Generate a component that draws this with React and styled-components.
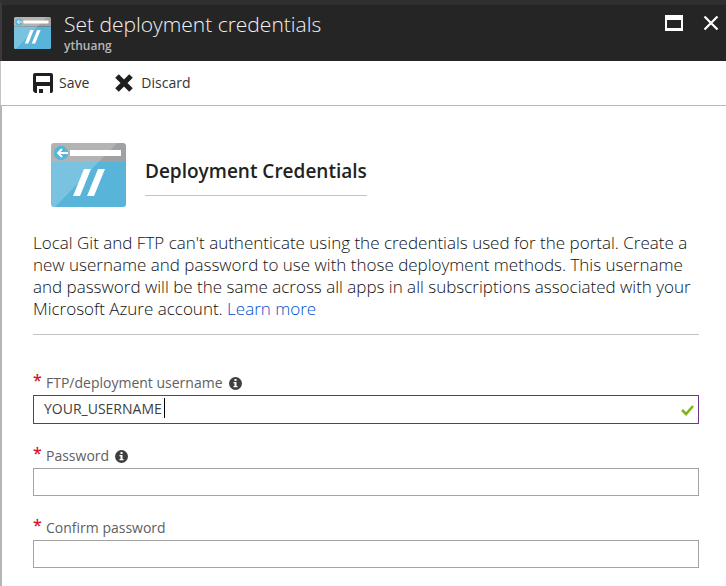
import React, { useId, useState } from "react";
import styled, { createGlobalStyle, css } from "styled-components";

const GlobalStyle = createGlobalStyle`
  *, *::before, *::after { box-sizing: border-box; }
  body {
    margin: 0;
    background: #ffffff;
    color: #333333;
    font-family: "Open Sans", "Noto Sans", sans-serif;
  }
  button, input { font: inherit; }
`;

const Blade = styled.main`
  display: flex;
  flex-direction: column;
  min-height: 100vh;
`;

const Header = styled.header`
  display: flex;
  align-items: flex-start;
  height: 61px;
  padding: 4px 7px 0 12px;
  border-top: 5px solid #2f2f2f;
  border-left: 2px solid #3a3a3a;
  background: #252525;
  color: #f2f2f2;
`;

const HeaderIcon = styled.div`
  display: flex;
  margin: 8px 13px 0 0;
`;

const Titles = styled.div`
  flex: 1;
  min-width: 0;
`;

const Title = styled.h1`
  margin: 0;
  font-size: 21px;
  font-weight: 300;
  line-height: 30px;
  white-space: nowrap;
`;

const Subtitle = styled.p`
  margin: 0;
  color: #b8b8b8;
  font-size: 12px;
  font-weight: 600;
  line-height: 14px;
`;

const WindowButtons = styled.div`
  display: flex;
  gap: 20px;
  padding-top: 6px;
`;

const IconButton = styled.button`
  display: flex;
  padding: 0;
  border: 0;
  background: none;
  color: #ffffff;
  cursor: pointer;
`;

const Toolbar = styled.div`
  display: flex;
  align-items: center;
  gap: 26px;
  height: 45px;
  padding-left: 32px;
  border-left: 1px solid #c4c4c4;
  border-bottom: 1px solid #b8b8b8;
`;

const Command = styled.button`
  display: flex;
  align-items: center;
  gap: ${({ $gap }) => $gap}px;
  padding: 0;
  border: 0;
  background: none;
  color: #333333;
  font-size: 14px;
  line-height: 20px;
  cursor: pointer;
`;

const Content = styled.section`
  flex: 1;
  padding: 37px 27px 16px 31px;
  border-left: 2px solid #b5b5b5;
`;

const Intro = styled.div`
  display: flex;
  align-items: flex-start;
  gap: 19px;
  padding-left: 18px;
`;

const SectionTitle = styled.h2`
  margin: 14px 0 0;
  padding-bottom: 10px;
  border-bottom: 1px solid #c4c4c4;
  color: #222222;
  font-size: 19px;
  font-weight: 600;
  line-height: 28px;
`;

const Description = styled.p`
  margin: 25px 0 0;
  padding-bottom: 14px;
  border-bottom: 1px solid #c4c4c4;
  color: #111111;
  font-size: 17px;
  font-weight: 300;
  line-height: 22px;
`;

const Link = styled.a`
  color: #0050c8;
  text-decoration: none;
`;

const Form = styled.form`
  display: grid;
  gap: 20px;
  padding-top: 36px;
`;

const LabelRow = styled.div`
  display: flex;
  align-items: center;
  height: 24px;
  color: #606060;
  font-size: 14px;
  line-height: 24px;
`;

const Required = styled.span`
  align-self: flex-start;
  width: 13px;
  color: #d0182b;
  font-size: 16px;
  font-weight: 600;
  line-height: 18px;
`;

const InfoButton = styled(IconButton)`
  margin-left: 6px;
  color: #404040;
`;

const InputFrame = styled.div`
  position: relative;
  display: flex;
`;

const Input = styled.input`
  width: 100%;
  height: ${({ $active }) => ($active ? 29 : 28)}px;
  padding: 0 30px 2px 10px;
  border: 1px solid #a3a3a3;
  border-radius: 0;
  outline: 0;
  background: #ffffff;
  color: #404040;
  font-size: 14px;
  ${({ $active }) =>
    $active &&
    css`
      border-color: transparent;
      background:
        linear-gradient(#ffffff, #ffffff) padding-box,
        linear-gradient(#713390, #713390) right / 19px 100% no-repeat border-box,
        #165a8c border-box;
    `}
`;

const Caret = styled.span`
  position: absolute;
  top: 3px;
  left: 131px;
  width: 1px;
  height: 20px;
  background: #000000;
  pointer-events: none;
`;

const ValidMark = styled.span`
  position: absolute;
  top: 9px;
  right: 5px;
  display: flex;
  pointer-events: none;
`;

function CredentialsIcon({ width, height }) {
  return (
    <svg width={width} height={height} viewBox="0 0 75 64" aria-hidden="true" preserveAspectRatio="none">
      <path d="M0 19h75v42q0 3-3 3H3q-3 0-3-3Z" fill="#59b4d9" />
      <path d="M3 0h69q3 0 3 3v16H0V3q0-3 3-3Z" fill="#a0a1a2" />
      <path d="M3 0h63L4 64H3q-3 0-3-3V3q0-3 3-3Z" fill="#fff" opacity=".2" />
      <circle cx="10" cy="10" r="7.2" fill="#59b4d9" />
      <path d="M17 10H7M11 6l-4 4 4 4" fill="none" stroke="#fff" strokeWidth="1.8" />
      <path d="M19 7h51v6H19Z" fill="#fff" />
      <path d="M33 26h7L29 53h-7ZM47 26h7L43 53h-7Z" fill="#fff" />
    </svg>
  );
}

function SaveIcon() {
  return (
    <svg width="20" height="20" viewBox="0 0 20 20" aria-hidden="true">
      <path
        fillRule="evenodd"
        fill="#1f1f1f"
        d="M2 0h16q2 0 2 2v16q0 2-2 2h-1v-7H4v7H2l-2-2V2q0-2 2-2ZM3 3v6h14V3Z"
      />
      <path d="M6 16h4v4H6Z" fill="#1f1f1f" />
    </svg>
  );
}

function DiscardIcon() {
  return (
    <svg width="18" height="18" viewBox="0 0 18 18" aria-hidden="true">
      <path d="m2 2 14 14M16 2 2 16" stroke="#1f1f1f" strokeWidth="5" />
    </svg>
  );
}

function MaximizeIcon() {
  return (
    <svg width="18" height="16" viewBox="0 0 18 16" aria-hidden="true">
      <path fillRule="evenodd" fill="currentColor" d="M0 0h18v16H0ZM2 5v8h14V5Z" />
    </svg>
  );
}

function CloseIcon() {
  return (
    <svg width="16" height="16" viewBox="0 0 16 16" aria-hidden="true">
      <path d="m1.500 1.500 13 13M14.500 1.500l-13 13" stroke="currentColor" strokeWidth="2.200" />
    </svg>
  );
}

function InfoIcon() {
  return (
    <svg width="13" height="13" viewBox="0 0 13 13" aria-hidden="true">
      <circle cx="6.500" cy="6.500" r="6.500" fill="currentColor" />
      <path d="M5.500 2h2v2h-2ZM4.500 5h3v4h1v1.300h-4V9h1V6.300h-1Z" fill="#fff" />
    </svg>
  );
}

function CheckIcon() {
  return (
    <svg width="13" height="12" viewBox="0 0 13 12" aria-hidden="true">
      <path d="m1 6 4 4 7-8" fill="none" stroke="#7fb51b" strokeWidth="2.600" />
    </svg>
  );
}

function Field({ label, info, active, initialValue = "", type = "text" }) {
  const id = useId();
  const [value, setValue] = useState(initialValue);
  return (
    <div>
      <LabelRow>
        <Required aria-hidden="true">*</Required>
        <label htmlFor={id}>{label}</label>
        {info && (
          <InfoButton type="button" aria-label={`About ${label}`}>
            <InfoIcon />
          </InfoButton>
        )}
      </LabelRow>
      <InputFrame>
        <Input
          id={id}
          type={type}
          required
          $active={active}
          value={value}
          onChange={(event) => setValue(event.target.value)}
        />
        {active && (
          <>
            {value === initialValue && <Caret />}
            <ValidMark>
              <CheckIcon />
            </ValidMark>
          </>
        )}
      </InputFrame>
    </div>
  );
}

export default function App() {
  return (
    <>
      <GlobalStyle />
      <Blade>
        <Header>
          <HeaderIcon>
            <CredentialsIcon width={37} height={32} />
          </HeaderIcon>
          <Titles>
            <Title>Set deployment credentials</Title>
            <Subtitle>ythuang</Subtitle>
          </Titles>
          <WindowButtons>
            <IconButton type="button" aria-label="Maximize">
              <MaximizeIcon />
            </IconButton>
            <IconButton type="button" aria-label="Close">
              <CloseIcon />
            </IconButton>
          </WindowButtons>
        </Header>
        <Toolbar>
          <Command type="button" $gap={6}>
            <SaveIcon />
            Save
          </Command>
          <Command type="button" $gap={8}>
            <DiscardIcon />
            Discard
          </Command>
        </Toolbar>
        <Content>
          <Intro>
            <CredentialsIcon width={75} height={64} />
            <SectionTitle>Deployment Credentials</SectionTitle>
          </Intro>
          <Description>
            Local Git and FTP can't authenticate using the credentials used for the portal. Create a
            new username and password to use with those deployment methods. This username and
            password will be the same across all apps in all subscriptions associated with your
            Microsoft Azure account. <Link href="#learn-more">Learn more</Link>
          </Description>
          <Form>
            <Field label="FTP/deployment username" info active initialValue="YOUR_USERNAME" />
            <Field label="Password" info type="password" />
            <Field label="Confirm password" type="password" />
          </Form>
        </Content>
      </Blade>
    </>
  );
}
